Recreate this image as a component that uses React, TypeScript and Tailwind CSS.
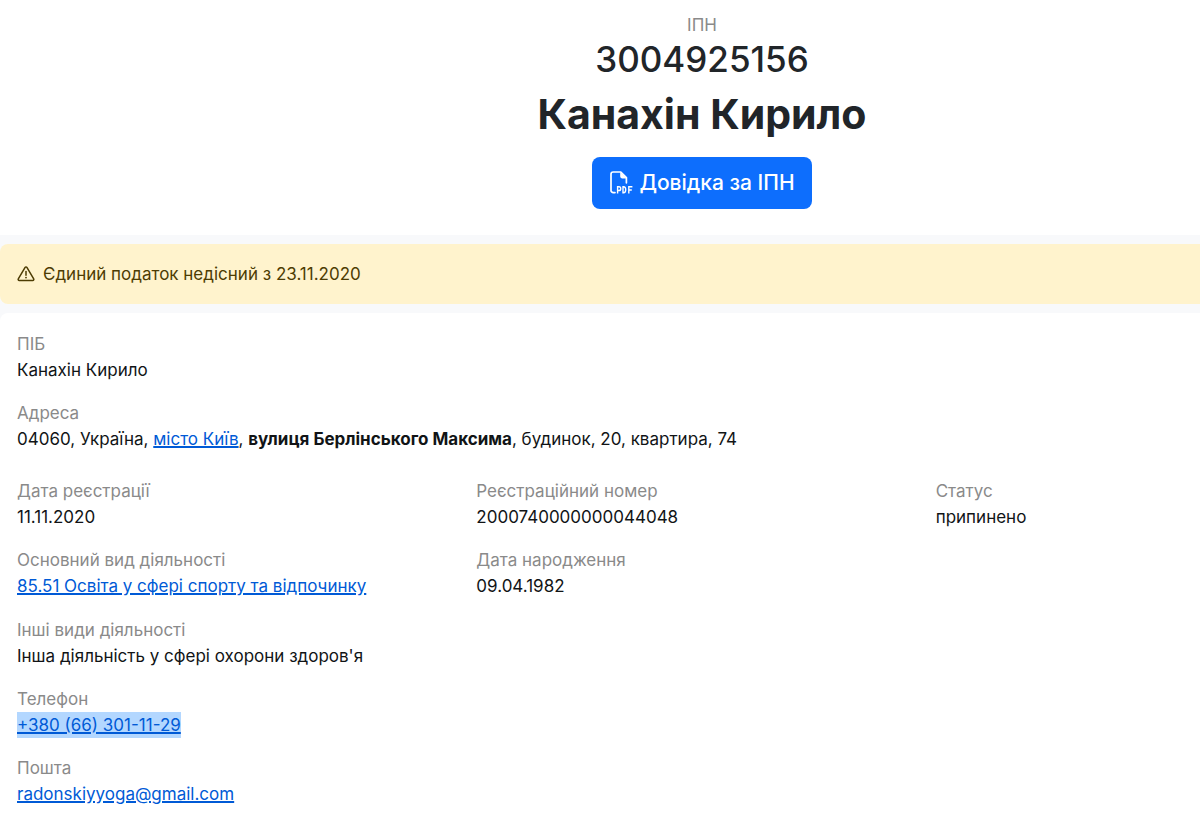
import type { ReactNode } from 'react';

function PdfIcon() {
  return (
    <svg viewBox="0 0 24 24" className="size-6" fill="none" aria-hidden="true">
      <path
        d="M6 21.6H4.2a2.2 2.2 0 0 1-2.2-2.2V3.2A2.2 2.2 0 0 1 4.2 1h7.6L17.4 6.6v5.2"
        stroke="currentColor"
        strokeWidth="1.7"
        strokeLinecap="round"
        strokeLinejoin="round"
      />
      <path d="M11.2 1v4.6a1.8 1.8 0 0 0 1.8 1.8H18z" fill="currentColor" />
      <path
        d="M8.6 22.4v-6.6h1.3a1.8 1.8 0 0 1 0 3.7H8.6M14 15.8v6h.6q2.1 0 2.1-3t-2.1-3zM19.8 22.4v-6.6h3.6M19.8 19h3"
        stroke="currentColor"
        strokeWidth="1.4"
      />
    </svg>
  );
}

function WarningIcon() {
  return (
    <svg viewBox="0 0 18 18" className="size-[18px]" fill="none" aria-hidden="true">
      <path
        d="M8.1 2.4a1.05 1.05 0 0 1 1.8 0l6.8 11.4a1.05 1.05 0 0 1-.9 1.6H2.2a1.05 1.05 0 0 1-.9-1.6z"
        stroke="currentColor"
        strokeWidth="1.5"
        strokeLinejoin="round"
      />
      <path d="M9 6.4v3.8" stroke="currentColor" strokeWidth="1.5" strokeLinecap="round" />
      <circle cx="9" cy="12.6" r="0.9" fill="currentColor" />
    </svg>
  );
}

function Field({ label, children }: { label: string; children: ReactNode }) {
  return (
    <div>
      <dt className="text-[#8a8a8a]">{label}</dt>
      <dd>{children}</dd>
    </div>
  );
}

function TextLink({ href, children }: { href: string; children: ReactNode }) {
  return (
    <a href={href} className="text-[#005ad6] underline decoration-2">
      {children}
    </a>
  );
}

export default function App() {
  return (
    <div className="min-h-screen overflow-x-hidden bg-white font-['Inter',sans-serif] text-[17px] leading-[26px] text-[#111416]">
      <div className="flex w-[117%] flex-col gap-[9px] bg-[#f8f9fb]">
        <header className="flex flex-col items-center bg-white pt-3 pb-[26px] text-[#212529]">
          <div className="text-[#8a8a8a]">ІПН</div>
          <div className="text-[35px] leading-[42px] font-medium">3004925156</div>
          <h1 className="mt-2 text-[41px] leading-[52px] font-bold">Канахін Кирило</h1>
          <button
            type="button"
            className="mt-[17px] flex h-[52px] items-center gap-1.5 rounded-lg bg-[#0d6efd] px-[17px] text-[21px] font-medium text-white"
          >
            <PdfIcon />
            Довідка за ІПН
          </button>
        </header>

        <div role="alert" className="flex items-center gap-2 rounded-lg bg-[#fff3cd] p-[17px] text-[#4d3c03]">
          <WarningIcon />
          Єдиний податок недісний з 23.11.2020
        </div>

        <main className="rounded-t-lg bg-white px-[17px] py-[18px]">
          <dl className="space-y-[17px]">
            <Field label="ПІБ">Канахін Кирило</Field>
            <Field label="Адреса">
              04060, Україна, <TextLink href="#kyiv">місто Київ</TextLink>,{' '}
              <strong className="font-bold">вулиця Берлінського Максима</strong>, будинок, 20, квартира, 74
            </Field>
          </dl>

          <dl className="mt-[26px] grid grid-cols-3 gap-x-2 gap-y-[17px]">
            <Field label="Дата реєстрації">11.11.2020</Field>
            <Field label="Реєстраційний номер">2000740000000044048</Field>
            <Field label="Статус">припинено</Field>
            <Field label="Основний вид діяльності">
              <TextLink href="#85.51">85.51 Освіта у сфері спорту та відпочинку</TextLink>
            </Field>
            <Field label="Дата народження">09.04.1982</Field>
          </dl>

          <dl className="mt-[18px] space-y-[17px]">
            <Field label="Інші види діяльності">Інша діяльність у сфері охорони здоров'я</Field>
            <Field label="Телефон">
              <span className="inline-block bg-[#b3d7ff]">
                <TextLink href="tel:+380663011129">+380 (66) 301-11-29</TextLink>
              </span>
            </Field>
            <Field label="Пошта">
              <TextLink href="mailto:radonskiyyoga@gmail.com">radonskiyyoga@gmail.com</TextLink>
            </Field>
          </dl>
        </main>
      </div>
    </div>
  );
}
